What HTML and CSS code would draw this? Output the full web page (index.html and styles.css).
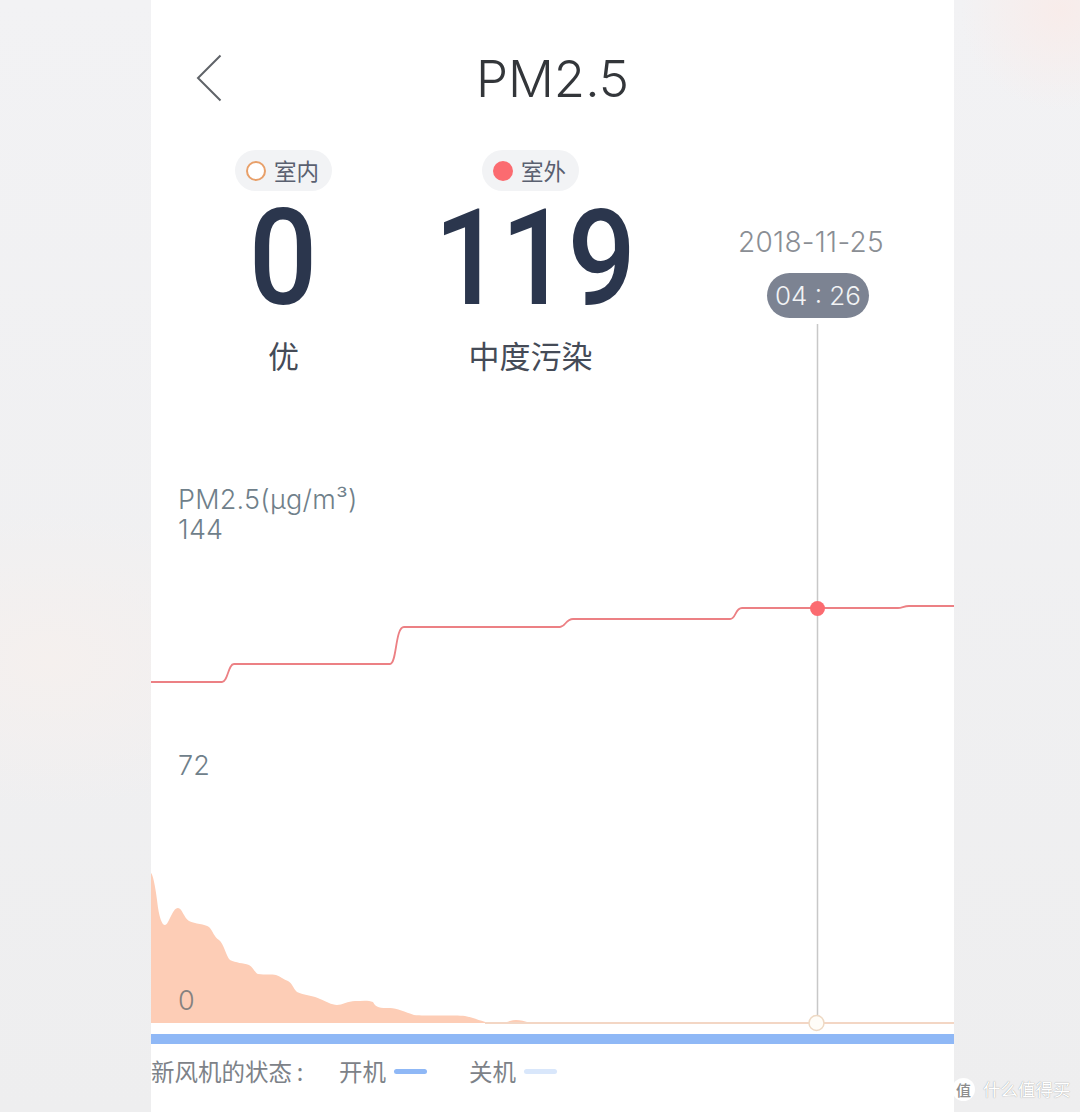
FILE: index.html
```html
<!DOCTYPE html>
<html lang="zh-CN">
<head>
<meta charset="utf-8">
<title>PM2.5</title>
<link rel="stylesheet" href="styles.css">
</head>
<body>
<div class="stage">
  <main class="phone">
    <header class="topbar">
      <svg class="back" width="26" height="48" viewBox="0 0 26 48"><path d="M24.500 1.500 2 24 24.500 46.500" fill="none" stroke="#5f6368" stroke-width="2"/></svg>
      <h1 class="title">PM2.5</h1>
    </header>
    <section class="stats">
      <div class="stat stat-in">
        <div class="chip"><span class="dot dot-ring"></span>室内</div>
        <div class="value">0</div>
        <div class="level">优</div>
      </div>
      <div class="stat stat-out">
        <div class="chip"><span class="dot dot-fill"></span>室外</div>
        <div class="value">119</div>
        <div class="level">中度污染</div>
      </div>
      <div class="when">
        <div class="date">2018-11-25</div>
        <div class="time">04 : 26</div>
      </div>
    </section>
    <section class="chart">
      <svg class="plot" viewBox="151 390 803 655" width="803" height="655">
        <path d="M151 873C153 875 155 885 157 900C159 918 162 925 165 925C169 925 172 908 178 908C182 908 184 918 189 921C195 924 205 924 209 927C213 931 214 937 219 940C224 944 226 956 230 960C236 963 243 963 249 965C253 967 255 973 258 974C265 975 272 974 276 975C280 976 284 980 288 981C292 983 293 988 297 992C303 995 315 996 320 999C325 1001 332 1005 337 1005C342 1005 348 1001 355 1001C362 1001 368 1000 373 1002C376 1008 380 1008 390 1008C397 1008 405 1012 414 1015C425 1016 455 1015 465 1016C475 1018 483 1022 490 1023C497 1023 505 1023 510 1021C515 1019 522 1020 530 1023L954 1023V1023H151Z" fill="#fdcdb6"/>
        <path d="M485 1023H954" fill="none" stroke="#f3d6c4" stroke-width="2"/>
        <path d="M151 682H222C228 682 228 664 234 664H390C397 664 395 627 404 627H560C565 627 566 619 573 619H730C736 619 735 608 742 608H898C902 608 904 606 909 606H954" fill="none" stroke="#ec8084" stroke-width="1.800"/>
        <path d="M817.500 324V1016" stroke="#c8c8c8" stroke-width="1.500"/>
        <circle cx="817.500" cy="608.500" r="7.500" fill="#fb6b70"/>
        <circle cx="816.500" cy="1023" r="7.500" fill="#fffdf8" stroke="#eed9c4" stroke-width="1.500"/>
        <rect x="151" y="1034" width="803" height="10" fill="#8fb8f6"/>
      </svg>
      <div class="axis axis-unit">PM2.5(µg/m³)</div>
      <div class="axis axis-144">144</div>
      <div class="axis axis-72">72</div>
      <div class="axis axis-0">0</div>
    </section>
    <footer class="legend">
      <span class="legend-title">新风机的状态&thinsp;:</span>
      <span class="legend-item legend-on">开机<i class="swatch swatch-on"></i></span>
      <span class="legend-item">关机<i class="swatch swatch-off"></i></span>
    </footer>
  </main>
  <div class="mark">
    <span class="mark-logo">值</span>
    <span class="mark-text">什么值得买</span>
  </div>
</div>
</body>
</html>
```
FILE: styles.css
```css
* { box-sizing: border-box; }
html, body { margin: 0; height: 100%; }
body {
  font-family: "Inter", "Noto Sans CJK SC", sans-serif;
  background: #f0f0f2;
  overflow: hidden;
}
.stage {
  position: relative;
  width: 1080px;
  height: 1112px;
  padding-left: 151px;
  background:
    radial-gradient(circle at 1060px 10px, #f8ecea 0, rgba(248,236,234,0) 100px),
    radial-gradient(ellipse at 50px 660px, #f5f0ee 0, rgba(245,240,238,0) 230px),
    linear-gradient(#f2f2f4, #eeeeef);
}
.phone {
  position: relative;
  width: 803px;
  height: 1112px;
  background: #fff;
  display: flex;
  flex-direction: column;
}
.topbar {
  position: relative;
  height: 150px;
  display: flex;
  justify-content: center;
  padding-top: 47px;
}
.back { position: absolute; left: 45px; top: 54px; }
.title {
  margin: 0;
  font: 300 51px/64px "Inter", "Liberation Sans", sans-serif;
  color: #33363a;
  text-align: center;
}
.stats {
  display: flex;
  height: 240px;
  align-items: flex-start;
}
.stat {
  display: flex;
  flex-direction: column;
  align-items: center;
}
.stat-in { width: 265px; }
.stat-out { width: 229px; }
.chip {
  height: 41px;
  width: 97px;
  border-radius: 21px;
  background: #f2f3f5;
  display: flex;
  align-items: center;
  gap: 8px;
  padding-left: 11px;
  font: 400 22.500px/39px "Noto Sans CJK SC", sans-serif;
  color: #5a6070;
}
.dot { width: 20px; height: 20px; border-radius: 50%; flex: none; }
.dot-ring { border: 2.500px solid #e8a06a; background: #fff; }
.dot-fill { background: #fb6b70; }
.value {
  font: 500 134px/128px "Roboto", sans-serif;
  color: #2b364d;
  margin-top: 4px;
  transform: scaleX(.9);
}
.stat-out .value { letter-spacing: -2px; margin-left: 8px; }
.level {
  font: 400 31px/40px "Noto Sans CJK SC", sans-serif;
  color: #454b57;
  margin-top: 12px;
}
.when {
  display: flex;
  flex-direction: column;
  align-items: center;
  margin-left: 93px;
  padding-top: 74px;
}
.date { font: 300 28px/36px "Inter", sans-serif; letter-spacing: .3px; color: #8a8e94; }
.time {
  margin-top: 13px;
  margin-left: 14px;
  width: 102px;
  height: 45px;
  border-radius: 23px;
  background: #7c8392;
  color: #f2f3f5;
  font: 300 26px/45px "Inter", sans-serif;
  text-align: center;
}
.chart { position: absolute; left: 0; top: 390px; width: 803px; height: 655px; }
.plot { display: block; overflow: visible; }
.axis {
  position: absolute;
  left: 27px;
  font: 300 27px/32px "Inter", sans-serif;
  letter-spacing: .25px;
  color: #6f808a;
}
.axis-unit { top: 94px; }
.axis-144 { top: 124px; }
.axis-72 { top: 360px; }
.axis-0 { top: 595px; color: #85817f; }
.legend {
  position: absolute;
  left: 0;
  top: 1054px;
  display: flex;
  align-items: center;
  height: 34px;
  font: 400 23.500px/34px "Noto Sans CJK SC", sans-serif;
  color: #7d8288;
}
.legend-title { width: 188px; }
.legend-item { display: flex; align-items: center; gap: 8px; width: 130px; }
.swatch { display: block; width: 33px; height: 5px; border-radius: 3px; }
.swatch-on { background: #8fb8f6; }
.swatch-off { background: #d9e7fb; }
.mark {
  position: absolute;
  left: 952px;
  top: 1077px;
  display: flex;
  align-items: center;
  gap: 8px;
}
.mark-logo {
  width: 23px;
  height: 23px;
  border-radius: 50%;
  background: rgba(255,255,255,.95);
  color: #8c8c8c;
  font: 500 15px/23px "Noto Sans CJK SC", sans-serif;
  text-align: center;
}
.mark-text {
  font: 400 17.500px/24px "Noto Sans CJK SC", sans-serif;
  color: #fff;
  text-shadow: 0 0 1px #8a8a8a;
}
```
